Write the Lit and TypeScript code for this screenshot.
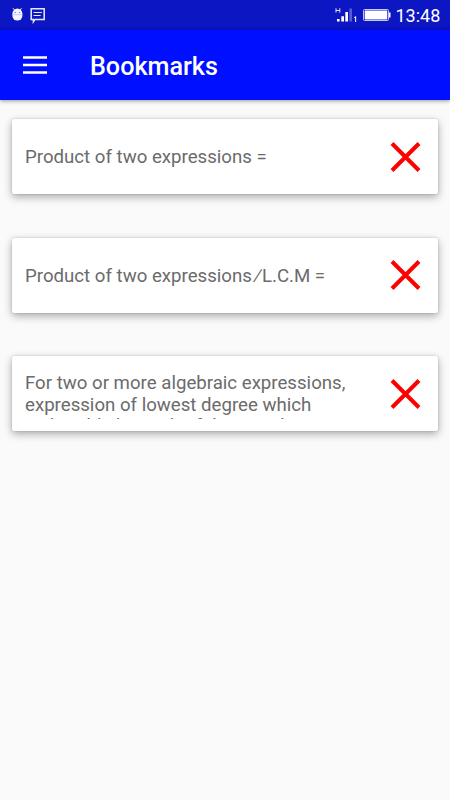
import { LitElement, html, css } from "lit";
import { customElement, property } from "lit/decorators.js";

@customElement("status-bar")
class StatusBar extends LitElement {
  static styles = css`
    :host { display: flex; align-items: center; justify-content: space-between; height: 30px; padding: 0 9.5px 0 10px; box-sizing: border-box; background: linear-gradient(#0c16c2 0 26px, #080fd0 30px); color: #fff; }
    .group { display: flex; align-items: center; height: 30px; }
    .time { font: 18px/33px Roboto, sans-serif; width: 45px; margin-left: 4.5px; white-space: nowrap; }
    svg { display: block; }
  `;
  render() {
    return html`
      <div class="group">
        <svg width="36" height="30" viewBox="10 0 36 30">
          <path d="M13 8.2l1.6 2M21.5 8.2l-1.6 2" stroke="#e4e6fa" stroke-width="1"/>
          <path d="M12.4 13.8a5 5.4 0 0 1 10 0v2a5 4.8 0 0 1-10 0z" fill="#f4f5fe"/>
          <path d="M12.4 14.6h10" stroke="#b9bdf0" stroke-width=".7"/>
          <path d="M14.6 12.5h1.4M18.8 12.5h1.4" stroke="#7b82e0" stroke-width="1.2"/>
          <path d="M31.2 8.8h13v10.6h-9.2l-1.6 2.4v-2.4h-2.2z" fill="none" stroke="#e8eafc" stroke-width="1.5"/>
          <path d="M33.6 12.5h8.2M33.6 15.5h7" stroke="#e8eafc" stroke-width="1.2"/>
        </svg>
      </div>
      <div class="group">
        <svg width="56" height="30" viewBox="335 0 56 30">
          <path d="M336 8.3v4.4M339.8 8.3v4.4M336 10.5h3.8" stroke="#dfe1fa" stroke-width="1" fill="none"/>
          <path d="M337 19h2.6v2.5H337zM341.3 16.2h2.7v5.3h-2.7zM345.3 12h2.7v9.5h-2.7z" fill="#fff"/>
          <path d="M349.3 8.5h2.7v13h-2.7z" fill="#555bd8"/>
          <path d="M354.2 17.8l1.4-.8v5" stroke="#e8eafc" stroke-width="1.1" fill="none"/>
          <rect x="363.5" y="9.5" width="25" height="11" rx="1" fill="none" stroke="#c5c8f2"/>
          <path d="M364.7 10.5h22.6v9h-22.6zM389 12.5h1.5v5H389z" fill="#fff"/>
        </svg>
        <span class="time">13:48</span>
      </div>`;
  }
}

@customElement("bookmark-card")
class BookmarkCard extends LitElement {
  @property() text = "";
  @property() tail = "";
  static styles = css`
    :host { display: flex; align-items: center; justify-content: space-between; height: 75px; box-sizing: border-box; padding: 0 17px 0 13px; background: #fff; border-radius: 2px; box-shadow: 0 3px 8px rgba(0,0,0,.33), 0 0 2px rgba(0,0,0,.2); }
    .clip { width: 330px; max-height: 51px; overflow: hidden; box-sizing: border-box; padding-top: 1px; color: #6b6b6b; font: 18.65px/22px Roboto, sans-serif; }
    .long { padding-top: 4px; }
    .tail { margin-top: -1px; white-space: nowrap; }
    .slash { padding: 0 2px 0 5px; }
    svg { display: block; }
  `;
  render() {
    const parts = this.text.split("\u2215");
    return html`
      <div class="clip ${this.tail ? "long" : ""}">${parts.map((p, i) => (i ? html`<span class="slash">&#8725;</span>${p}` : p))}${this.tail ? html`<div class="tail">${this.tail}</div>` : ""}</div>
      <svg width="31" height="30" viewBox="0 0 31 30"><path d="M2 1.5l27 27M29 1.5l-27 27" stroke="#f00" stroke-width="4"/></svg>`;
  }
}

@customElement("app-root")
class AppRoot extends LitElement {
  static styles = css`
    :host { display: flex; flex-direction: column; height: 800px; background: #fafafa; overflow: hidden; }
    .bar { display: flex; align-items: center; height: 70px; flex: none; box-sizing: border-box; padding: 0 23px; gap: 43px; background: #000fff; color: #fff; box-shadow: 0 1px 4px rgba(0,0,0,.4); }
    .bar svg { display: block; margin-bottom: 1px; }
    .title { font: 500 25.15px/30px Roboto, sans-serif; margin-top: 4px; }
    .list { display: flex; flex-direction: column; gap: 43.5px; padding: 19px 12px; }
  `;
  private items = [
    { text: "Product of two expressions =", tail: "" },
    { text: "Product of two expressions\u2215L.C.M =", tail: "" },
    { text: "For two or more algebraic expressions, expression of lowest degree which", tail: "is divisible by each of them and" },
  ];
  render() {
    return html`
      <status-bar></status-bar>
      <div class="bar">
        <svg width="24" height="18" viewBox="0 0 24 18"><path d="M0 1.5h24M0 9h24M0 16.5h24" stroke="#fff" stroke-width="2.6"/></svg>
        <span class="title">Bookmarks</span>
      </div>
      <div class="list">${this.items.map((t) => html`<bookmark-card .text=${t.text} .tail=${t.tail}></bookmark-card>`)}</div>`;
  }
}
